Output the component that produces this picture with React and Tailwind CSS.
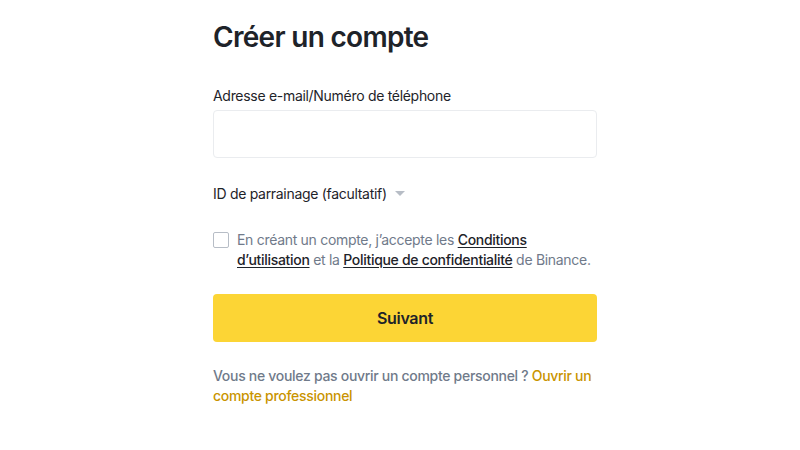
export default function App() {
  return (
    <div className="w-[800px] h-[450px] bg-white overflow-hidden" style={{ fontFamily: 'Inter, "Noto Sans", sans-serif' }}>
      <div className="w-[384px] ml-[213px] pt-[19px] flex flex-col">
        <h1 className="text-[28px] leading-[36px] font-semibold text-[#1E2329] tracking-[-0.7px]">Créer un compte</h1>
        <div className="mt-[31px] text-[14px] leading-[20px] text-[#1E2329] tracking-[-0.3px]">Adresse e-mail/Numéro de téléphone</div>
        <div className="mt-[4px] h-[48px] rounded-[4px] border border-[#EAECEF]"></div>
        <div className="mt-[26px] flex items-center gap-[8px] text-[14px] leading-[20px] text-[#1E2329] tracking-[-0.3px]">
          <span>ID de parrainage (facultatif)</span>
          <svg width="10" height="6" viewBox="0 0 10 6"><path d="M0 0h10L5 5z" fill="#B7BDC6" /></svg>
        </div>
        <div className="mt-[26px] flex gap-[8px]">
          <div className="mt-[2px] w-[16px] h-[16px] shrink-0 rounded-[2px] border border-[#B7BDC6]"></div>
          <p className="text-[14px] leading-[20px] text-[#707A8A] tracking-[-0.3px]">
            En créant un compte, j’accepte les <a className="font-medium text-[#1E2329] underline underline-offset-2">Conditions d’utilisation</a> et la <a className="font-medium text-[#1E2329] underline underline-offset-2">Politique de confidentialité</a> de Binance.
          </p>
        </div>
        <button className="mt-[24px] h-[48px] rounded-[4px] bg-[#FCD535] text-[16px] font-semibold text-[#1E2329] tracking-[-0.3px]">Suivant</button>
        <p className="mt-[24px] text-[14px] leading-[20px] font-medium text-[#707A8A] tracking-[-0.3px]">
          Vous ne voulez pas ouvrir un compte personnel ? <a className="text-[#C99400]">Ouvrir un compte professionnel</a>
        </p>
      </div>
    </div>
  );
}
